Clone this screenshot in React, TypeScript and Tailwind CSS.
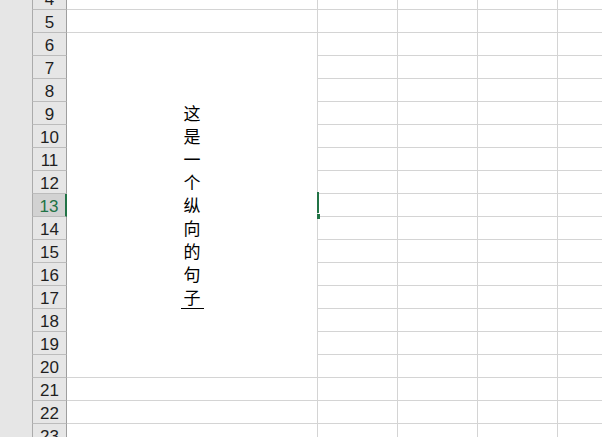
import React from "react";

const rows = Array.from({ length: 20 }, (_, i) => i + 4);
const chars = ["这", "是", "一", "个", "纵", "向", "的", "句", "子"];

export default function App() {
  return (
    <div className="relative flex w-[602px] h-[437px] overflow-hidden bg-white">
      <div className="w-[32px] shrink-0 bg-[#e6e6e6]" />
      <div className="-mt-[13px] grid shrink-0 grid-cols-[35px_251px_80px_80px_80px_80px] auto-rows-[23px]">
        <div className="col-start-2 row-start-3 row-span-15 flex items-center justify-center border-r border-b border-[#d4d4d4] bg-white">
          <div className="flex flex-col items-center pb-[1px]">
            {chars.map((c, i) => (
              <span
                key={i}
                className="block text-[17px] leading-[23px] text-black"
                style={{ fontFamily: '"Noto Sans CJK SC", sans-serif' }}
              >
                {c}
              </span>
            ))}
            <div className="h-px w-[23px] bg-black" />
          </div>
        </div>
        {rows.map((r) => {
          const sel = r === 13;
          const cells = [];
          cells.push(
            <div
              key={`h${r}`}
              className={
                sel
                  ? "col-start-1 overflow-hidden border-l border-l-[#ababab] border-b border-b-[#bcbcbc] border-r-2 border-r-[#217346] bg-[#d2d2d2] pt-[2px] text-center text-[17px] leading-[22px] text-[#217346]"
                  : "col-start-1 overflow-hidden border-l border-l-[#ababab] border-b border-b-[#bcbcbc] border-r border-r-[#9e9e9e] bg-[#e6e6e6] pt-[2px] text-center text-[17px] leading-[22px] text-[#1f1f1f]"
              }
              style={{ fontFamily: '"Liberation Sans", Arial, sans-serif' }}
            >
              {r}
            </div>
          );
          const outside = r < 6 || r > 20;
          if (outside) {
            cells.push(<div key={`a${r}`} className="border-r border-b border-[#d4d4d4]" />);
          }
          for (let c = 0; c < 4; c++) {
            cells.push(<div key={`c${r}-${c}`} className="border-r border-b border-[#d4d4d4]" />);
          }
          return cells;
        })}
      </div>
      <div className="absolute left-[317px] top-[192px] h-[21px] w-[2px] bg-[#217346]" />
      <div className="absolute left-[317px] top-[214px] h-[5px] w-[3px] bg-[#217346]" />
    </div>
  );
}
